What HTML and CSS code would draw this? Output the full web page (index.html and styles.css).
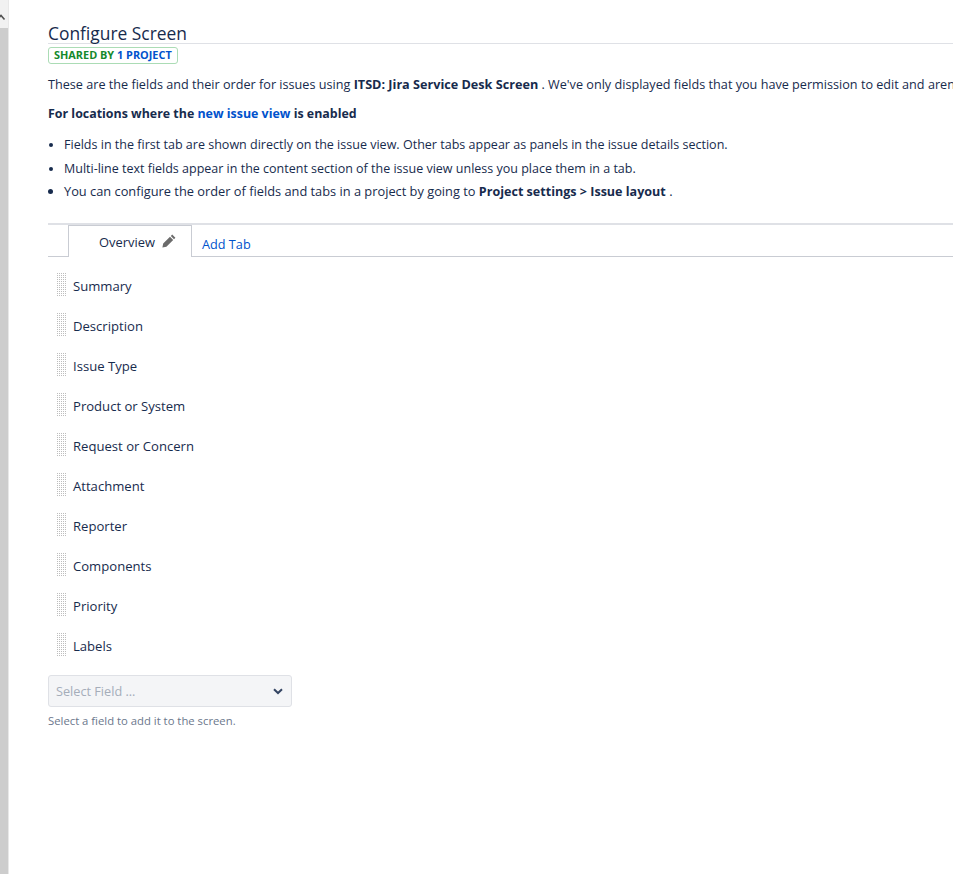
FILE: index.html
```html
<!DOCTYPE html>
<html lang="en">
<head>
<meta charset="utf-8">
<title>Configure Screen</title>
<link rel="stylesheet" href="styles.css">
</head>
<body>
<div class="page">
  <aside class="scrollbar">
    <div class="scroll-top"><svg class="scroll-arrow" width="8" height="8" viewBox="0 0 8 8"><path d="M-1 3.5 L1 1.5 L4.5 5.5" fill="none" stroke="#505050" stroke-width="1.6"/></svg></div>
    <div class="scroll-thumb"></div>
  </aside>
  <main class="content">
    <h1 class="title">Configure Screen</h1>
    <div class="badge-row"><span class="badge"><span class="badge-green">SHARED BY</span> <span class="badge-blue">1 PROJECT</span></span></div>
    <p class="intro">These are the fields and their order for issues using <strong>ITSD: Jira Service Desk Screen</strong> . We've only displayed fields that you have permission to edit and aren't hidden.</p>
    <p class="locations"><strong>For locations where the <a href="#" class="link">new issue view</a> is enabled</strong></p>
    <ul class="notes">
      <li class="note-first">Fields in the first tab are shown directly on the issue view. Other tabs appear as panels in the issue details section.</li>
      <li>Multi-line text fields appear in the content section of the issue view unless you place them in a tab.</li>
      <li class="note-wide">You can configure the order of fields and tabs in a project by going to <strong>Project settings &gt; Issue layout</strong> .</li>
    </ul>
    <div class="tabs">
      <div class="tab-active"><span>Overview</span>
        <svg class="pencil" width="14" height="14" viewBox="0 0 14 14"><path d="M10.2 0.6 L13.4 3.8 L12 5.2 L8.8 2 Z M8 2.8 L11.2 6 L4.4 12.8 L0.4 13.6 L1.2 9.6 Z" fill="#6b6b6b"/></svg>
      </div>
      <a href="#" class="tab-add">Add Tab</a>
    </div>
    <ul class="fields">
      <li class="field"><span class="grip"></span><span class="field-name">Summary</span></li>
      <li class="field"><span class="grip"></span><span class="field-name">Description</span></li>
      <li class="field"><span class="grip"></span><span class="field-name">Issue Type</span></li>
      <li class="field"><span class="grip"></span><span class="field-name">Product or System</span></li>
      <li class="field"><span class="grip"></span><span class="field-name">Request or Concern</span></li>
      <li class="field"><span class="grip"></span><span class="field-name">Attachment</span></li>
      <li class="field"><span class="grip"></span><span class="field-name">Reporter</span></li>
      <li class="field"><span class="grip"></span><span class="field-name">Components</span></li>
      <li class="field"><span class="grip"></span><span class="field-name">Priority</span></li>
      <li class="field"><span class="grip"></span><span class="field-name">Labels</span></li>
    </ul>
    <div class="select">
      <span class="select-text">Select Field ...</span>
      <svg class="chevron" width="10" height="7" viewBox="0 0 10 7"><path d="M1 1.2 L5 5 L9 1.2" fill="none" stroke="#344563" stroke-width="2"/></svg>
    </div>
    <p class="help">Select a field to add it to the screen.</p>
  </main>
</div>
</body>
</html>
```
FILE: styles.css
```css
* { box-sizing: border-box; }
html, body { margin: 0; padding: 0; height: 100%; overflow: hidden; background: #fff; }
body { font-family: "Open Sans", "Noto Sans", sans-serif; font-size: 12.5px; color: #172b4d; }
.page { display: flex; width: 953px; height: 874px; overflow: hidden; }
.scrollbar { flex: none; width: 9px; display: flex; flex-direction: column; background: #fff; border-right: 1px solid #e8e8e8; }
.scroll-top { height: 28px; background: #f1f1f1; }
.scroll-arrow { display: block; margin-top: 14px; }
.scroll-thumb { flex: 1; background: #cdcdcd; }
.content { flex: none; width: 944px; padding: 22px 0 0 39px; overflow: hidden; }
.title { margin: 0; height: 21px; font-size: 17.4px; line-height: 22px; font-weight: 400; color: #172b4d; }
.badge-row { border-top: 1px solid #dfe1e6; padding-top: 3px; height: 20px; display: flex; }
.badge { display: block; height: 17px; width: 130px; border: 1px solid #abdcb5; border-radius: 3px; font-size: 10.9px; line-height: 14px; font-weight: 700; padding-left: 5px; white-space: nowrap; }
.badge-green { color: #14892c; }
.badge-blue { color: #0052cc; }
.intro { margin: 12px 0 0; font-size: 12.65px; line-height: 18px; white-space: nowrap; }
.locations { margin: 12px 0 0; font-size: 12.42px; line-height: 18px; white-space: nowrap; }
strong { font-weight: 700; }
.link { color: #0052cc; text-decoration: none; }
.notes { margin: 10px 0 0; padding: 0 0 0 16px; line-height: 24px; white-space: nowrap; }
.note-first { font-size: 12.54px; }
.note-wide { margin-top: -2px; font-size: 12.82px; }
.note-wide strong { font-size: 12.55px; }
.tabs { display: flex; height: 34px; margin-top: 19px; border-top: 2px solid #dfe1e6; border-bottom: 1px solid #c9ccd3; align-items: stretch; }
.tab-active { width: 124px; margin-left: 20px; margin-bottom: -1px; border: 1px solid #c9ccd3; border-bottom: 0; background: #fff; padding: 7px 0 0 30px; font-size: 12.9px; line-height: 18px; color: #172b4d; white-space: nowrap; }
.pencil { margin-left: 4px; vertical-align: -1px; }
.tab-add { padding: 10px 0 0 10px; font-size: 12.7px; line-height: 18px; color: #0052cc; text-decoration: none; }
.fields { list-style: none; margin: 9px 0 0; padding: 0; }
.field { display: flex; height: 40px; align-items: center; padding-left: 9px; }
.grip { flex: none; width: 9px; height: 24px; margin-top: -2px; background-image: radial-gradient(circle at 0.5px 0.5px, #bdbdbd 0.7px, transparent 0.8px); background-size: 2px 2px; }
.field-name { margin-left: 7px; font-size: 13.1px; line-height: 18px; color: #172b4d; }
.select { display: flex; align-items: center; justify-content: space-between; width: 244px; height: 32px; margin-top: 9px; padding: 0 8px 0 7px; background: #f4f5f7; border: 1px solid #dfe1e6; border-radius: 3px; }
.select-text { font-size: 12.7px; color: #a5adba; }
.help { margin: 6px 0 0; font-size: 11.3px; line-height: 15px; color: #6b778c; }
```
